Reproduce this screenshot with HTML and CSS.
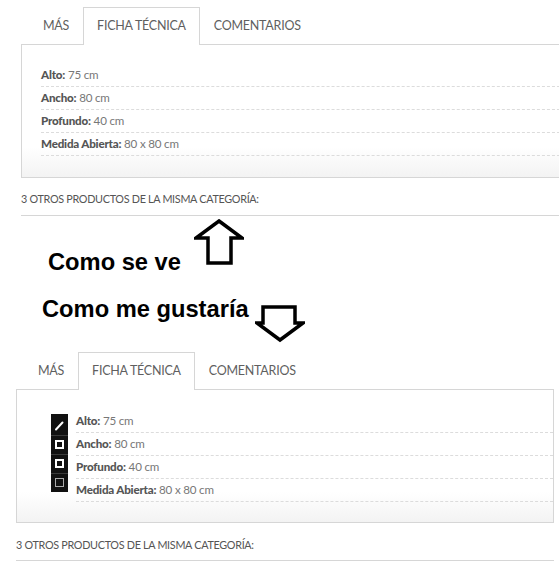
FILE: index.html
```html
<!DOCTYPE html>
<html lang="es">
<head>
<meta charset="utf-8">
<title>Ficha técnica</title>
<link rel="stylesheet" href="styles.css">
</head>
<body>
<section class="product product-top">
  <div class="tabs">
    <div class="tab">MÁS</div>
    <div class="tab active">FICHA TÉCNICA</div>
    <div class="tab">COMENTARIOS</div>
  </div>
  <div class="panel">
    <ul class="specs">
      <li><b>Alto:</b> 75 cm</li>
      <li><b>Ancho:</b> 80 cm</li>
      <li><b>Profundo:</b> 40 cm</li>
      <li><b>Medida Abierta:</b> 80 x 80 cm</li>
    </ul>
  </div>
  <h3 class="related">3 OTROS PRODUCTOS DE LA MISMA CATEGORÍA:</h3>
</section>

<div class="notes">
  <div class="note note-now">
    <span class="note-text">Como se ve</span>
    <svg class="arrow arrow-up" width="50" height="47" viewBox="0 0 50 47">
      <polygon points="25,2 48,19 37,19 37,44 14,44 14,19 2,19" fill="#fff" stroke="#000" stroke-width="3.5" stroke-linejoin="miter"/>
    </svg>
  </div>
  <div class="note note-wish">
    <span class="note-text">Como me gustaría</span>
    <svg class="arrow arrow-down" width="50" height="38" viewBox="0 0 50 38">
      <polygon points="8,2 40,2 40,18 48,18 25,35 2,18 8,18" fill="#fff" stroke="#000" stroke-width="3.5" stroke-linejoin="miter"/>
    </svg>
  </div>
</div>

<section class="product product-bottom">
  <div class="tabs">
    <div class="tab">MÁS</div>
    <div class="tab active">FICHA TÉCNICA</div>
    <div class="tab">COMENTARIOS</div>
  </div>
  <div class="panel">
    <svg class="icon-strip" width="17" height="78" viewBox="0 0 17 78">
      <rect width="17" height="78" fill="#111"/>
      <line x1="0" y1="21.5" x2="17" y2="21.5" stroke="#3a3a3a"/>
      <line x1="0" y1="40.5" x2="17" y2="40.5" stroke="#3a3a3a"/>
      <line x1="0" y1="59.5" x2="17" y2="59.5" stroke="#3a3a3a"/>
      <path d="M5 15.5 L11.5 8.5" stroke="#fff" stroke-width="2" stroke-linecap="round"/>
      <rect x="5" y="27" width="7" height="7" fill="none" stroke="#fff" stroke-width="2"/>
      <rect x="5" y="46" width="7" height="7" fill="none" stroke="#fff" stroke-width="2"/>
      <rect x="4.5" y="64.5" width="8" height="8" fill="none" stroke="#aaa" stroke-width="1"/>
    </svg>
    <ul class="specs">
      <li><b>Alto:</b> 75 cm</li>
      <li><b>Ancho:</b> 80 cm</li>
      <li><b>Profundo:</b> 40 cm</li>
      <li><b>Medida Abierta:</b> 80 x 80 cm</li>
    </ul>
  </div>
  <h3 class="related">3 OTROS PRODUCTOS DE LA MISMA CATEGORÍA:</h3>
</section>
</body>
</html>
```

FILE: styles.css
```css
html, body {
  margin: 0;
  padding: 0;
  overflow: hidden;
  background: #fff;
}

body {
  font-family: Lato, "Open Sans", sans-serif;
  color: #666;
}

.product-top {
  margin: 7px 0 0 21px;
  width: 560px;
}

.product-bottom {
  margin: 9px 0 0 16px;
  width: 538px;
}

.tabs {
  display: flex;
  align-items: flex-start;
  height: 37px;
  padding-left: 8px;
}

.tab {
  box-sizing: border-box;
  height: 37px;
  padding: 0 13px;
  line-height: 36px;
  border: 1px solid transparent;
  border-bottom: 0;
  font-size: 12.5px;
  letter-spacing: -0.25px;
  color: #5f5f5f;
  white-space: nowrap;
}

.tab.active {
  position: relative;
  z-index: 1;
  height: 38px;
  border-color: #d6d6d6;
  background: #fff;
}

.panel {
  position: relative;
  border: 1px solid #d6d6d6;
  background: linear-gradient(to bottom, #fff calc(100% - 30px), #f3f3f3 100%);
}

.product-top .panel {
  padding: 19px 0 21px 19px;
}

.product-bottom .panel {
  padding: 20px 0 20px 59px;
}

.specs {
  list-style: none;
  margin: 0;
  padding: 0;
}

.specs li {
  line-height: 22px;
  border-bottom: 1px dashed #dcdcdc;
  font-size: 11.6px;
  letter-spacing: -0.2px;
  color: #777;
}

.specs b {
  font-weight: 900;
  color: #555;
}

.related {
  margin: 0;
  line-height: 20px;
  font-size: 10.8px;
  letter-spacing: -0.3px;
  font-weight: 400;
  color: #555;
  border-bottom: 1px solid #d6d6d6;
}

.product-top .related {
  margin-top: 11px;
  padding-bottom: 6px;
}

.product-bottom .related {
  margin-top: 12px;
  padding-bottom: 5px;
}

.icon-strip {
  position: absolute;
  left: 34px;
  top: 24px;
  display: block;
}

.notes {
  padding-top: 3px;
}

.note {
  display: flex;
  align-items: flex-start;
}

.note-text {
  font-family: "Liberation Sans", Arial, sans-serif;
  font-weight: 700;
  font-size: 23.7px;
  line-height: 26px;
  color: #000;
  white-space: nowrap;
}

.note-now {
  padding-left: 48px;
}

.note-now .note-text {
  margin-top: 30px;
}

.note-now .arrow {
  margin-left: 13px;
}

.note-wish {
  padding-left: 42px;
  margin-top: 21px;
}

.note-wish .arrow {
  margin-left: 6px;
  margin-top: 9px;
}

.arrow {
  display: block;
  flex: none;
}
```
